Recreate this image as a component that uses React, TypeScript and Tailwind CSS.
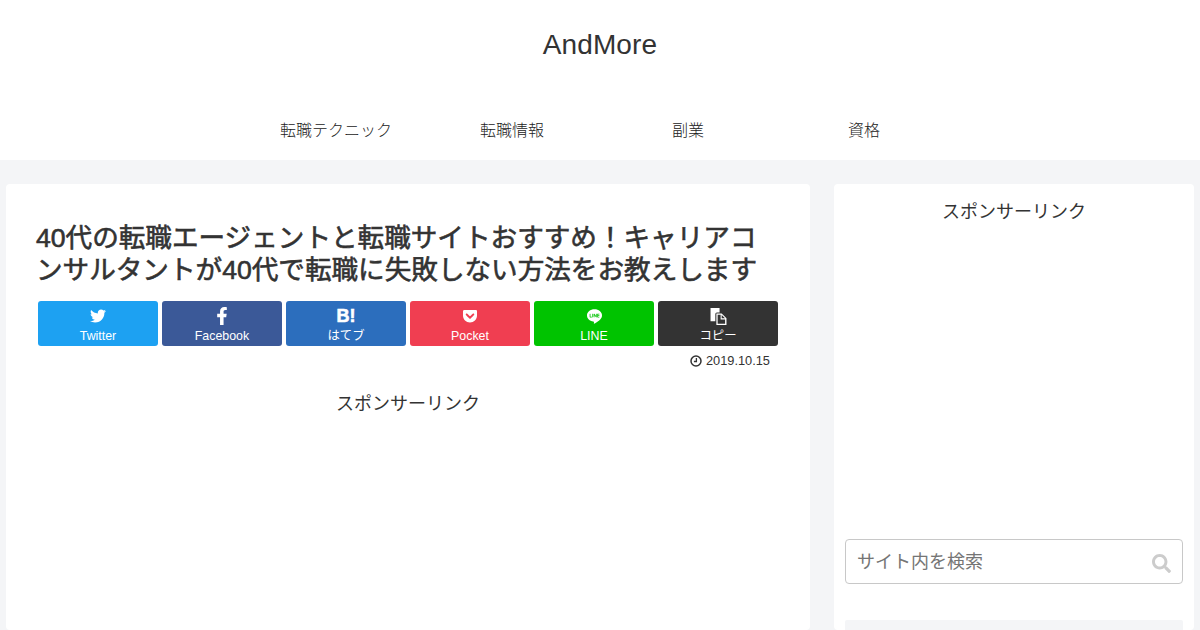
import React from "react";
import { FaTwitter, FaFacebookF, FaGetPocket, FaSearch } from "react-icons/fa";
import { SiLine } from "react-icons/si";

const CopyIcon = () => (
  <svg viewBox="0 0 16 16" className="w-[17px] h-[17px]" fill="currentColor">
    <path d="M0.5 0h8.5v4.2H6.5A1.5 1.5 0 0 0 5 5.7V12.5H0.5z" />
    <path fillRule="evenodd" d="M6 5.2h5l4.5 4.5V16H6zM7.2 6.4V14.8h7V10.8h-4.2V6.4zM11 6.6V9.7h3.1z" />
  </svg>
);

const ClockIcon = () => (
  <svg viewBox="0 0 12 12" className="w-3 h-3" fill="none" stroke="currentColor">
    <circle cx="6" cy="6" r="5" strokeWidth="1.5" />
    <path d="M6.4 2.9v3.6H3.9" strokeWidth="1.3" />
  </svg>
);

const buttons = [
  { label: "Twitter", bg: "bg-[#1da1f2]", icon: <FaTwitter className="w-4 h-4" /> },
  { label: "Facebook", bg: "bg-[#3b5998]", icon: <FaFacebookF className="w-[18px] h-[18px]" /> },
  { label: "はてブ", bg: "bg-[#2c6ebd]", icon: <span className="text-[18px] font-bold leading-4 [-webkit-text-stroke:0.6px_white]">B!</span> },
  { label: "Pocket", bg: "bg-[#f03e51]", icon: <FaGetPocket className="w-4 h-4" /> },
  { label: "LINE", bg: "bg-[#00c300]", icon: <SiLine className="w-[15px] h-[15px]" /> },
  { label: "コピー", bg: "bg-[#333333]", icon: <CopyIcon /> },
];

const nav = ["転職テクニック", "転職情報", "副業", "資格"];

export default function App() {
  return (
    <div className="w-[1200px] h-[630px] overflow-hidden bg-[#f4f5f7] text-[#333333] font-['Liberation_Sans','Noto_Sans_CJK_JP',sans-serif]">
      <header className="bg-white h-[160px] flex flex-col items-center">
        <div className="h-[100px] pt-[28px] text-[28px] leading-[34px] tracking-[0.1px]">AndMore</div>
        <nav className="flex w-[704px]">
          {nav.map((n) => (
            <div key={n} className="w-[176px] h-[60px] flex justify-center pt-[19px] text-[16px] leading-6 font-light text-[#222222]">{n}</div>
          ))}
        </nav>
      </header>
      <main className="flex justify-between pl-[6px] pr-[6px] pt-[24px]">
        <article className="w-[804px] h-[446px] bg-white rounded-[4px] pt-[38px] px-[30px]">
          <h1 className="text-[26.6px] leading-[32px] font-normal [-webkit-text-stroke:0.6px_#333333]">
            40代の転職エージェントと転職サイトおすすめ！キャリアコンサルタントが40代で転職に失敗しない方法をお教えします
          </h1>
          <div className="flex gap-1 mt-[15px] ml-[2px]">
            {buttons.map((b) => (
              <div key={b.label} className={`w-[120px] h-[45px] rounded-[3px] text-white flex flex-col items-center pt-[7px] ${b.bg}`}>
                <div className="h-4 flex items-center justify-center">{b.icon}</div>
                <div className="text-[12.4px] leading-4 mt-[4px]">{b.label}</div>
              </div>
            ))}
          </div>
          <div className="flex justify-end items-center gap-[4px] mt-[7px] mr-[10px] text-[12.8px] leading-4">
            <ClockIcon />
            <span>2019.10.15</span>
          </div>
          <div className="text-center text-[18px] leading-6 mt-[23px]">スポンサーリンク</div>
        </article>
        <aside className="w-[360px] h-[446px] bg-white rounded-[4px] px-[11px] pt-[16px]">
          <div className="text-center text-[18px] leading-6">スポンサーリンク</div>
          <div className="mt-[315px] h-[45px] border border-[#c8c8c8] rounded-[4px] flex items-center justify-between pl-[11px] pr-[11px]">
            <span className="text-[18px] text-[#757575] translate-y-px">サイト内を検索</span>
            <FaSearch className="w-[19px] h-[19px] text-[#cccccc] mt-[3px]" />
          </div>
          <div className="mt-[36px] h-[40px] bg-[#f4f5f7] rounded-[2px]" />
        </aside>
      </main>
    </div>
  );
}
